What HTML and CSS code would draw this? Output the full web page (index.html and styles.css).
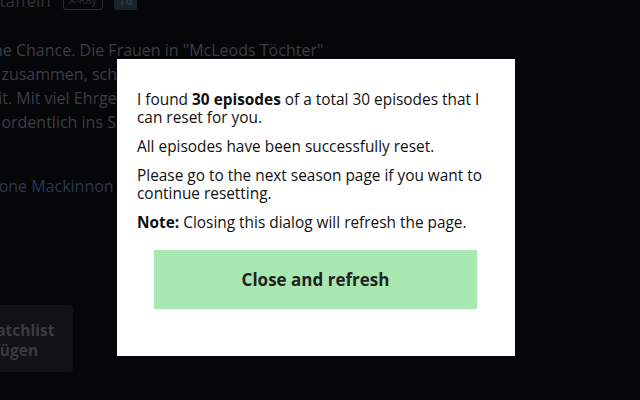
FILE: index.html
```html
<!DOCTYPE html>
<html>
<head>
<meta charset="utf-8">
<link rel="stylesheet" href="styles.css">
</head>
<body>
<div class="page">
  <div class="meta">
    <span class="seasons">2 Staffeln</span>
    <span class="badge-outline">X-Ray</span>
    <span class="badge-fill">16</span>
  </div>
  <p class="synopsis">eine Chance. Die Frauen in "McLeods Töchter"<br>so zusammen, scheuen keine Arbeit und kämpfen<br>Zeit. Mit viel Ehrgeiz und Herz setzt sich die Familie<br>so ordentlich ins Szene und beweist Mut.</p>
  <p class="cast">Simone Mackinnon und Lisa Chappell</p>
  <button class="watch">Zur Watchlist<br>hinzufügen</button>
</div>
<div class="overlay">
  <div class="dialog">
    <p>I found <b>30 episodes</b> of a total 30 episodes that I can reset for you.</p>
    <p>All episodes have been successfully reset.</p>
    <p>Please go to the next season page if you want to continue resetting.</p>
    <p><b>Note:</b> Closing this dialog will refresh the page.</p>
    <button class="close">Close and refresh</button>
  </div>
</div>
</body>
</html>
```
FILE: styles.css
```css
html, body {
  margin: 0;
  height: 100%;
  background: #050608;
  overflow: hidden;
}
body {
  font-family: "Open Sans", "Noto Sans", sans-serif;
}
.page {
  margin-left: -20px;
  width: 700px;
  color: #34383e;
}
.meta {
  display: flex;
  align-items: center;
  gap: 12px;
  margin-top: -12px;
  margin-left: -4px;
  height: 24px;
  font-size: 17px;
}
.seasons {
  color: #30343a;
}
.badge-outline {
  border: 1px solid #2a2e34;
  border-radius: 3px;
  font-size: 11px;
  padding: 0 5px;
  color: #2a2e34;
  line-height: 18px;
}
.badge-fill {
  background: #1a222d;
  color: #2a3440;
  font-size: 13px;
  font-weight: 700;
  padding: 0 4px;
  margin-left: -1px;
  border-radius: 2px;
  line-height: 20px;
}
.synopsis {
  margin: 26px 0 0 0;
  white-space: nowrap;
  font-size: 16px;
  line-height: 24px;
  color: #3b3e44;
}
.cast {
  margin: 41px 0 0 -9px;
  font-size: 16px;
  color: #293950;
}
.watch {
  margin-top: 108px;
  margin-left: -52px;
  display: block;
  width: 145px;
  height: 67px;
  background: #101216;
  border: none;
  border-radius: 4px;
  text-align: left;
  padding: 3px 0 0 23px;
  font-family: inherit;
  font-weight: 700;
  font-size: 15.5px;
  line-height: 20px;
  color: #383b40;
}
.overlay {
  position: fixed;
  inset: 0;
  display: flex;
  justify-content: center;
  align-items: flex-start;
  padding-top: 59px;
  padding-right: 8px;
}
.dialog {
  width: 358px;
  background: #fff;
  padding: 32px 20px 47px;
  color: #0f1111;
  font-size: 15.4px;
  line-height: 18px;
}
.dialog p {
  margin: 0 0 11px;
}
.close {
  display: block;
  margin: 18px 18px 0 17px;
  width: 323px;
  height: 59px;
  border: none;
  background: #a8e8b0;
  color: #222;
  font-family: inherit;
  font-weight: 700;
  font-size: 17px;
}
```
